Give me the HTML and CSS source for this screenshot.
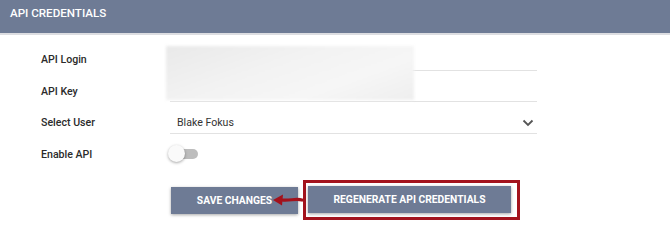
FILE: index.html
```html
<!DOCTYPE html>
<html lang="en">

<head>
  <meta charset="UTF-8">
  <meta name="viewport" content="width=device-width, initial-scale=1.0">
  <title>API Credentials</title>
  <link rel="stylesheet" href="styles.css">
</head>

<body>
  <div class="panel">
    <div class="panel-header">API CREDENTIALS</div>

    <div class="form">
      <div class="row">
        <label class="label">API Login</label>
        <div class="field"></div>
      </div>
      <div class="row">
        <label class="label">API Key</label>
        <div class="field"></div>
      </div>
      <div class="row">
        <label class="label">Select User</label>
        <div class="field select">
          <span>Blake Fokus</span>
          <svg class="chevron" width="12" height="8" viewBox="0 0 12 8">
            <path d="M1.5 1.5 L6 6 L10.5 1.5" fill="none" stroke="#555" stroke-width="1.8" />
          </svg>
        </div>
      </div>
      <div class="row">
        <label class="label">Enable API</label>
        <div class="field no-line">
          <span class="toggle"><span class="knob"></span></span>
        </div>
      </div>

      <!-- credentials are blurred out in the screenshot -->
      <div class="blur"></div>
    </div>

    <div class="actions">
      <button class="btn">SAVE CHANGES</button>
      <span class="highlight">
        <button class="btn btn-wide">REGENERATE API CREDENTIALS</button>
      </span>
      <svg class="arrow" width="32" height="14" viewBox="0 0 32 14">
        <path d="M30 7 C 24 5, 18 8, 10 7" fill="none" stroke="#a3111b" stroke-width="3.2" stroke-linecap="round" />
        <path d="M1 7 L11 1.5 L10 12.5 Z" fill="#a3111b" />
      </svg>
    </div>
  </div>
</body>

</html>
```

FILE: styles.css
```css
* {
  box-sizing: border-box;
  margin: 0;
  padding: 0;
}

body {
  font-family: Roboto, "Liberation Sans", Arial, sans-serif;
  background: #fff;
  color: #333;
}

.panel-header {
  height: 35px;
  background: #6e7b95;
  border-bottom: 2px solid #dcdde1;
  color: #fff;
  font-size: 11.6px;
  font-weight: 500;
  line-height: 27px;
  padding-left: 10px;
}

.form {
  position: relative;
  padding: 4px 0 0 41px;
}

.row {
  display: flex;
  height: 31.5px;
}

.label {
  width: 129px;
  font-size: 10.6px;
  font-weight: 500;
  line-height: 19px;
  padding-top: 11px;
  color: #2b2b2b;
}

.field {
  width: 367px;
  border-bottom: 1px solid #e2e2e2;
  font-size: 10.6px;
  line-height: 19px;
  padding-top: 11px;
}

.field.no-line {
  border-bottom: none;
}

.select {
  display: flex;
  justify-content: space-between;
  align-items: center;
  padding: 11px 3px 0 7px;
}

.select span {
  line-height: 19px;
}

.chevron {
  margin-top: 1px;
}

.toggle {
  display: block;
  position: relative;
  width: 26px;
  height: 10px;
  margin: 4px 0 0 2px;
  background: #bdbdbd;
  border-radius: 5px;
}

.knob {
  position: absolute;
  left: -4px;
  top: -4px;
  width: 17px;
  height: 17px;
  border-radius: 50%;
  background: #fafafa;
  box-shadow: 0 1px 3px rgba(0, 0, 0, 0.35);
}

.blur {
  position: absolute;
  left: 166px;
  top: 11px;
  width: 248px;
  height: 54px;
  background: linear-gradient(160deg, #e9e9e9 0%, #f2f2f2 40%, #f6f6f6 70%, #eeeeee 100%);
  filter: blur(1.5px);
}

.actions {
  position: relative;
  display: flex;
  align-items: center;
  padding: 15px 0 0 171px;
}

.btn {
  height: 27px;
  width: 127px;
  background: #6e7b95;
  color: #fff;
  border: none;
  font-family: Roboto, "Liberation Sans", Arial, sans-serif;
  font-size: 10.3px;
  font-weight: 700;
  box-shadow: 0 1px 3px rgba(0, 0, 0, 0.35);
}

.btn-wide {
  width: 203px;
  display: block;
}

.highlight {
  margin-left: 5px;
  border: 3px solid #a3131d;
  padding: 3px 6px 4px 2px;
}

.arrow {
  position: absolute;
  left: 272px;
  top: 28px;
}
```
